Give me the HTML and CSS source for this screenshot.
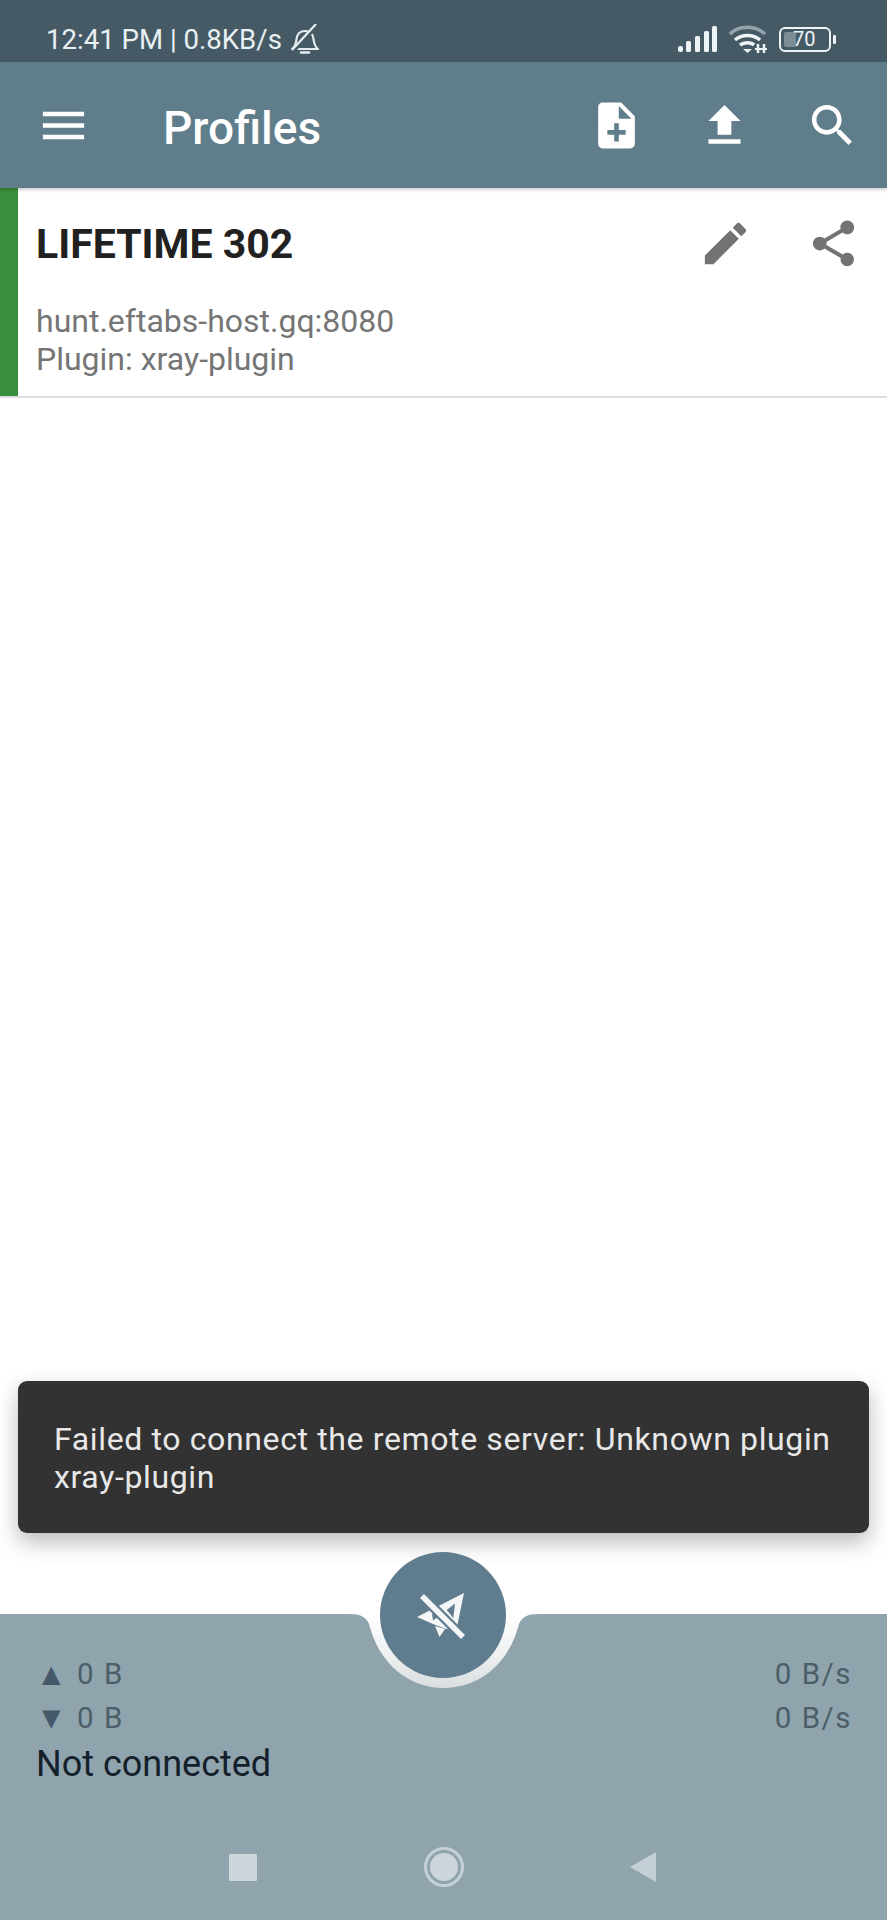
FILE: index.html
```html
<!DOCTYPE html>
<html>
<head>
    <meta charset="utf-8">
    <title>Profiles</title>
    <link rel="stylesheet" href="styles.css">
</head>
<body>
<div class="app">
    <div class="statusbar">
        <div class="status-left">
            <span>12:41 PM | 0.8KB/s</span>
            <svg class="bell" viewBox="0 0 30 30">
                <path d="M2 25c3-2 4-5 4.500-10 .5-5 4-8 8.500-8s8 3 8.500 8c.5 5 2 8 4.500 10z" fill="none" stroke="#e6eef2" stroke-width="2.200" stroke-linejoin="round"/>
                <path d="M11 28.500h8" stroke="#e6eef2" stroke-width="2.500" stroke-linecap="round"/>
                <path d="M3 27L27 1" stroke="#465a65" stroke-width="4.500"/>
                <path d="M2 26L26 0" stroke="#e6eef2" stroke-width="2.200"/>
            </svg>
        </div>
        <div class="status-right">
            <svg class="signal" viewBox="0 0 40 26">
                <rect x="0" y="20" width="5" height="6" rx="2" fill="#eef3f6"/>
                <rect x="8" y="15" width="5" height="11" rx="1.500" fill="#eef3f6"/>
                <rect x="17" y="10" width="5" height="16" rx="1.500" fill="#eef3f6"/>
                <rect x="26" y="5" width="5" height="21" rx="1.500" fill="#eef3f6"/>
                <rect x="34" y="0" width="5" height="26" rx="1.500" fill="#eef3f6"/>
            </svg>
            <svg class="wifi" viewBox="0 0 40 30">
                <path d="M2 10C11 1 27 1 37 10" fill="none" stroke="#93a3ab" stroke-width="3.500"/>
                <path d="M7 16c7-6 18-6 25 0" fill="none" stroke="#eef3f6" stroke-width="3.500"/>
                <path d="M12 21c4-3 11-3 14 0" fill="none" stroke="#eef3f6" stroke-width="3.500"/>
                <path d="M15 25h9l-4.500 4z" fill="#eef3f6"/>
                <path d="M30 20v9M36 20v9" stroke="#eef3f6" stroke-width="2.500"/>
                <path d="M27 25h12" stroke="#eef3f6" stroke-width="2"/>
            </svg>
            <div class="battery">
                <div class="battery-fill"></div>
                <span class="battery-num">70</span>
            </div>
            <div class="battery-tip"></div>
        </div>
    </div>

    <div class="appbar">
        <div class="nav-btn">
            <svg class="icon" viewBox="0 0 24 24"><path d="M3 18h18v-2H3v2zm0-5h18v-2H3v2zm0-7v2h18V6H3z"/></svg>
        </div>
        <div class="title">Profiles</div>
        <div class="action">
            <svg class="icon" viewBox="0 0 24 24"><path d="M14 2H6c-1.100 0-1.990.9-1.990 2L4 20c0 1.100.89 2 1.990 2H18c1.100 0 2-.9 2-2V8l-6-6zm2 14h-3v3h-2v-3H8v-2h3v-3h2v3h3v2zm-3-7V3.500L18.500 9H13z"/></svg>
        </div>
        <div class="action">
            <svg class="icon" viewBox="0 0 24 24"><path d="M9 16h6v-6h4l-7-7-7 7h4zm-4 2h14v2H5z"/></svg>
        </div>
        <div class="action">
            <svg class="icon" viewBox="0 0 24 24"><path d="M15.500 14h-.79l-.28-.27C15.410 12.590 16 11.110 16 9.500 16 5.910 13.090 3 9.500 3S3 5.910 3 9.500 5.910 16 9.500 16c1.610 0 3.090-.59 4.230-1.570l.27.28v.79l5 4.990L20.490 19l-4.990-5zm-6 0C7.010 14 5 11.990 5 9.500S7.010 5 9.500 5 14 7.010 14 9.500 11.990 14 9.500 14z"/></svg>
        </div>
    </div>

    <div class="profile">
        <div class="profile-strip"></div>
        <div class="profile-body">
            <div class="profile-head">
                <div class="profile-name">LIFETIME 302</div>
                <div class="card-action">
                    <svg class="icon icon-grey" viewBox="0 0 24 24"><path d="M3 17.250V21h3.750L17.810 9.940l-3.750-3.750L3 17.250zM20.710 7.040c.39-.39.39-1.020 0-1.410l-2.340-2.340c-.39-.39-1.020-.39-1.410 0l-1.830 1.830 3.750 3.750 1.830-1.830z"/></svg>
                </div>
                <div class="card-action">
                    <svg class="icon icon-grey" viewBox="0 0 24 24"><path d="M18 16.080c-.76 0-1.440.3-1.960.77L8.910 12.700c.05-.23.09-.46.09-.7s-.04-.47-.09-.7l7.050-4.110c.54.5 1.250.81 2.040.81 1.660 0 3-1.340 3-3s-1.340-3-3-3-3 1.340-3 3c0 .24.04.47.09.7L8.040 9.810C7.500 9.310 6.790 9 6 9c-1.660 0-3 1.340-3 3s1.340 3 3 3c.79 0 1.500-.31 2.040-.81l7.120 4.160c-.05.21-.08.43-.08.65 0 1.610 1.310 2.920 2.920 2.920s2.920-1.310 2.920-2.920-1.310-2.920-2.920-2.920z"/></svg>
                </div>
            </div>
            <div class="profile-info">hunt.eftabs-host.gq:8080<br>Plugin: xray-plugin</div>
        </div>
    </div>

    <div class="spacer"></div>

    <div class="toast">Failed to connect the remote server: Unknown plugin xray-plugin</div>

    <div class="bottombar">
        <svg class="cradle" viewBox="0 0 190 76">
            <defs>
                <linearGradient id="cradleFill" x1="0" y1="0" x2="0" y2="1">
                    <stop offset="0" stop-color="#ffffff"/>
                    <stop offset="0.55" stop-color="#eef0f1"/>
                    <stop offset="1" stop-color="#dadee0"/>
                </linearGradient>
            </defs>
            <path d="M0 0H190C178 0 173 3 170 10C160 50 130 74 95 74S30 50 20 10C17 3 12 0 0 0z" fill="url(#cradleFill)"/>
        </svg>
        <div class="fab">
            <svg viewBox="0 0 126 126" class="fab-icon">
                <path d="M84 41L37 65L53 72L66 77L77 75z" fill="#f4f6f7"/>
                <path d="M55 74L59.500 85L65 77z" fill="#f4f6f7"/>
                <path d="M66.700 58L75 51.500L73.300 66z" fill="#5f7d8e"/>
                <path d="M52 61L58 65L53 68.500z" fill="#5f7d8e"/>
                <path d="M42 44L83 85" stroke="#5f7d8e" stroke-width="10"/>
                <path d="M42 44L83 85" stroke="#f4f6f7" stroke-width="5.500"/>
            </svg>
        </div>
        <div class="stats">
            <div>
                <div class="stat-line"><span class="arrow">▲</span>0 B</div>
                <div class="stat-line"><span class="arrow">▼</span>0 B</div>
                <div class="conn">Not connected</div>
            </div>
            <div class="rates">
                <div class="stat-line">0 B/s</div>
                <div class="stat-line">0 B/s</div>
            </div>
        </div>
        <div class="navkeys">
            <div class="key-square"></div>
            <div class="key-circle"><div class="key-dot"></div></div>
            <div class="key-back"></div>
        </div>
    </div>
</div>
</body>
</html>
```

FILE: styles.css
```css
html, body {
    margin: 0;
    padding: 0;
    background: #fff;
}

.app {
    width: 887px;
    height: 1920px;
    display: flex;
    flex-direction: column;
    overflow: hidden;
    font-family: Roboto, "Liberation Sans", sans-serif;
}

.statusbar {
    height: 62px;
    background: #465a65;
    color: #e9f0f4;
    display: flex;
    align-items: center;
    justify-content: space-between;
    padding: 16px 51px 0 46px;
    font-size: 27.600px;
    box-sizing: border-box;
}

.status-left {
    display: flex;
    align-items: center;
    gap: 8px;
}

.bell {
    width: 30px;
    height: 30px;
}

.status-right {
    display: flex;
    align-items: center;
}

.signal {
    width: 40px;
    height: 26px;
}

.wifi {
    width: 40px;
    height: 30px;
    margin-left: 10px;
}

.battery {
    width: 52px;
    height: 25px;
    margin-left: 11px;
    box-sizing: border-box;
    border: 2.500px solid #eef3f6;
    border-radius: 6px;
    display: flex;
    align-items: center;
    padding-left: 3px;
}

.battery-fill {
    width: 12px;
    height: 15px;
    background: #7d8d96;
    border-radius: 2px;
}

.battery-num {
    font-size: 20px;
    color: #eef3f6;
    margin-left: -3px;
}

.battery-tip {
    width: 3px;
    height: 9px;
    background: #eef3f6;
    margin-left: 2px;
    border-radius: 1px;
}

.appbar {
    height: 126px;
    background: #607d8b;
    display: flex;
    align-items: center;
    color: #fff;
    box-shadow: 0 2px 3px rgba(0, 0, 0, .18);
    position: relative;
    padding-right: 1px;
}

.nav-btn {
    width: 126px;
    display: flex;
    justify-content: center;
}

.title {
    flex: 1;
    margin-left: 37px;
    padding-top: 5px;
    font-size: 46px;
    font-weight: 500;
}

.action {
    width: 108px;
    display: flex;
    justify-content: center;
}

.icon {
    width: 55px;
    height: 55px;
    fill: #fff;
    display: block;
}

.icon-grey {
    fill: #737373;
}

.profile {
    height: 210px;
    display: flex;
    border-bottom: 2px solid #dedede;
    background: #fff;
    box-sizing: border-box;
}

.profile-strip {
    width: 18px;
    background: #388e3c;
}

.profile-body {
    flex: 1;
    padding-left: 18px;
}

.profile-head {
    display: flex;
    align-items: center;
    height: 110px;
}

.profile-name {
    flex: 1;
    padding-top: 2px;
    font-size: 41px;
    font-weight: 700;
    color: #212121;
}

.card-action {
    width: 108px;
    display: flex;
    justify-content: center;
}

.profile-info {
    font-size: 32px;
    line-height: 38px;
    color: #757575;
    margin-top: 4px;
}

.spacer {
    flex: 1;
}

.toast {
    margin: 0 18px 81px;
    height: 152px;
    box-sizing: border-box;
    background: #323232;
    color: #e8e8e8;
    border-radius: 9px;
    padding: 39px 36px 0;
    font-size: 32px;
    line-height: 38px;
    letter-spacing: .63px;
    box-shadow: 0 9px 22px rgba(0, 0, 0, .28);
}

.bottombar {
    height: 306px;
    background: #90a4ae;
    position: relative;
    box-sizing: border-box;
    padding: 38px 36px 0;
    display: flex;
    flex-direction: column;
}

.cradle {
    position: absolute;
    left: 349px;
    top: 0;
    width: 190px;
    height: 76px;
}

.fab {
    position: absolute;
    left: 380px;
    top: -62px;
    width: 126px;
    height: 126px;
    border-radius: 50%;
    background: #5f7d8e;
}

.fab-icon {
    width: 126px;
    height: 126px;
    display: block;
}

.stats {
    display: flex;
    justify-content: space-between;
    height: 135px;
}

.stat-line {
    font-size: 29.500px;
    line-height: 44px;
    letter-spacing: 1.500px;
    color: #4b5f69;
}

.arrow {
    display: inline-block;
    width: 35px;
    margin-left: 6px;
    font-size: 24px;
    vertical-align: 2px;
    line-height: 30px;
    font-family: "DejaVu Sans", sans-serif;
    letter-spacing: 0;
    color: #46596a;
}

.conn {
    font-size: 36px;
    line-height: 46px;
    padding-top: 1px;
    color: #14212b;
}

.rates {
    text-align: right;
    margin-right: -1px;
}

.navkeys {
    display: flex;
    justify-content: space-between;
    align-items: center;
    margin-top: 60px;
    padding: 0 195px 0 193px;
}

.key-square {
    width: 28px;
    height: 27px;
    background: #cdd6db;
    border-radius: 1px;
}

.key-circle {
    width: 40px;
    height: 40px;
    box-sizing: border-box;
    border: 3px solid #c6d1d7;
    border-radius: 50%;
    padding: 3px;
}

.key-dot {
    width: 28px;
    height: 28px;
    border-radius: 50%;
    background: #cbd5da;
}

.key-back {
    width: 0;
    height: 0;
    border-top: 15px solid transparent;
    border-bottom: 15px solid transparent;
    border-right: 26px solid #c5d0d6;
}
```
